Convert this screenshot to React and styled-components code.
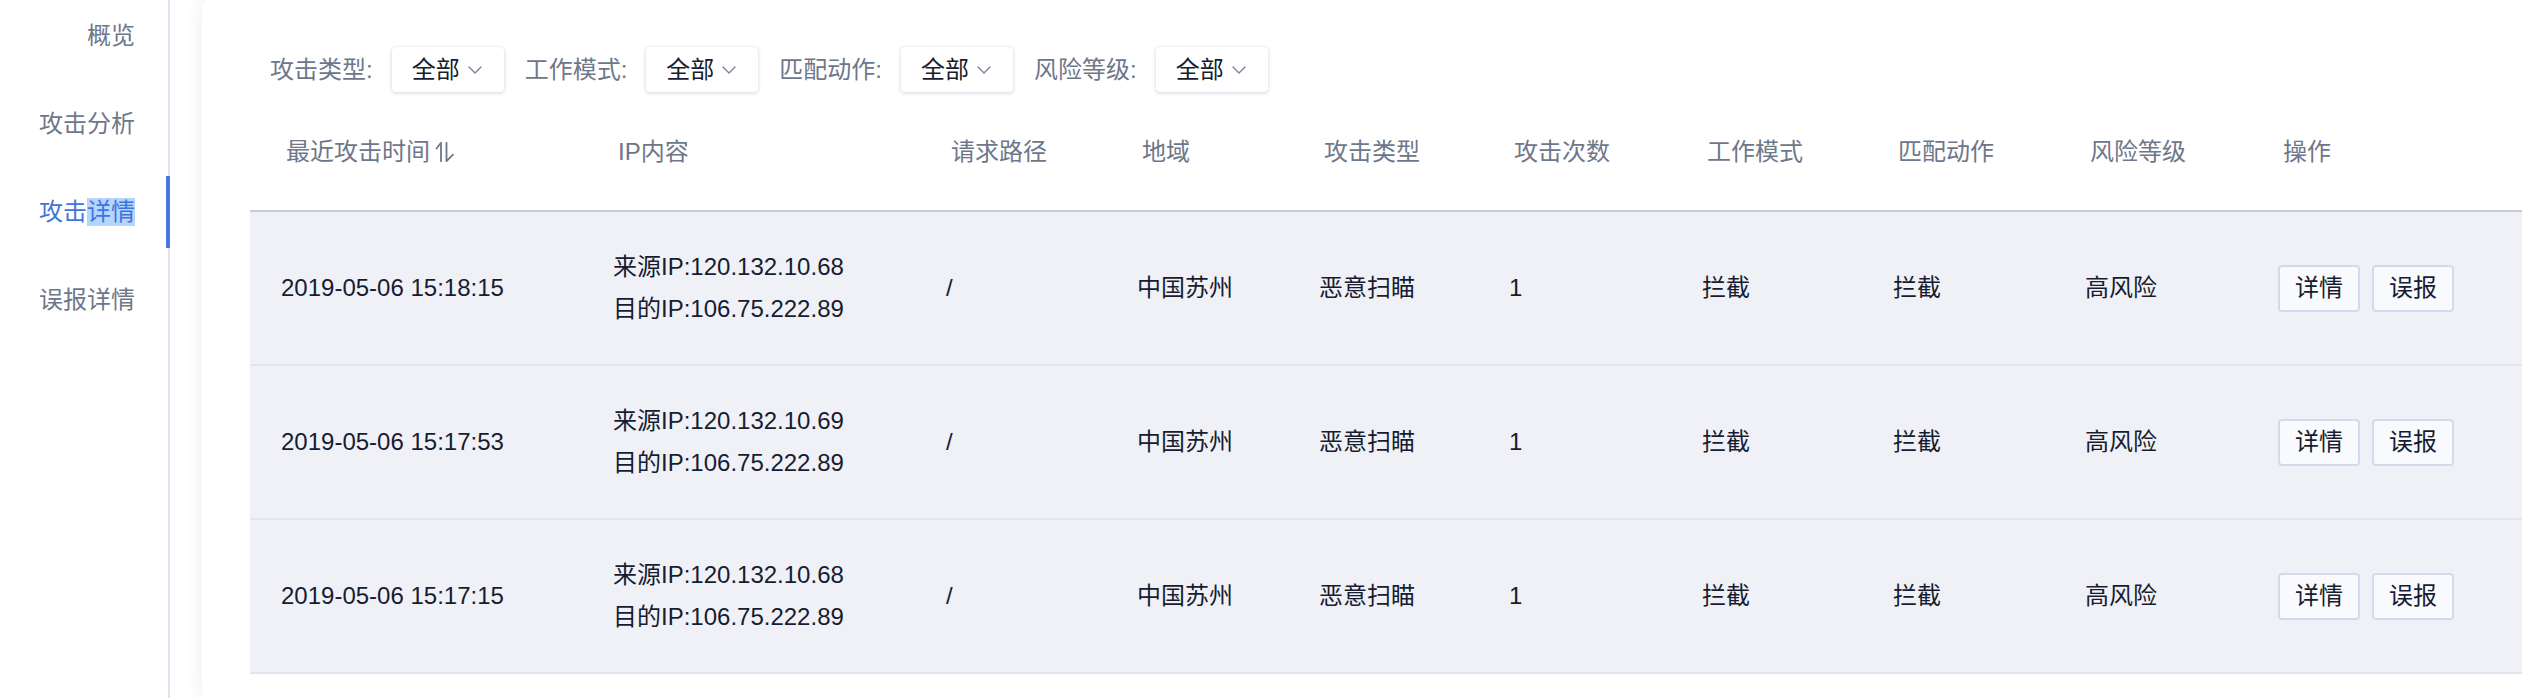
import React from "react";
import styled, { createGlobalStyle, css } from "styled-components";

const Global = createGlobalStyle`
  *, *::before, *::after { box-sizing: border-box; }
  html, body { margin: 0; padding: 0; background: #ffffff; overflow: hidden; }
  body { font-family: "Liberation Sans", "Noto Sans CJK SC", sans-serif; }
`;

const COLS = "332px 333px 191px 182px 190px 193px 191px 192px 193px 1fr";

const Page = styled.div`
  display: flex;
  width: 2536px;
  height: 698px;
  overflow: hidden;
  background: #ffffff;
`;

const Sidebar = styled.nav`
  flex: 0 0 170px;
  width: 170px;
  height: 100%;
  border-right: 2px solid #dfe3ef;
  display: flex;
  flex-direction: column;
  gap: 16px;
`;

const NavItem = styled.div`
  position: relative;
  height: 72px;
  display: flex;
  align-items: center;
  justify-content: flex-end;
  padding-right: 33px;
  font-size: 24px;
  line-height: 28px;
  color: #6e778a;
  ${(p) =>
    p.$active &&
    css`
      color: #3f74e0;
      &::after {
        content: "";
        position: absolute;
        right: -2px;
        top: 0;
        bottom: 0;
        width: 4px;
        background: #4677e2;
      }
    `}
`;

const Selected = styled.span`
  display: inline-block;
  height: 28px;
  line-height: 28px;
  background: #b4d5fd;
`;

const Main = styled.main`
  flex: 1 1 auto;
  padding-left: 32px;
  min-width: 0;
`;

const Card = styled.section`
  width: 2368px;
  height: 100%;
  background: #ffffff;
  border-radius: 8px 0 0 0;
  box-shadow: 0 0 18px rgba(40, 52, 110, 0.09);
  padding: 47px 48px 0 48px;
`;

const FilterBar = styled.div`
  display: flex;
  align-items: center;
  height: 45px;
  padding-left: 20px;
`;

const FilterLabel = styled.span`
  font-size: 24px;
  line-height: 1;
  color: #6e778a;
  margin-right: 19px;
  white-space: nowrap;
`;

const Select = styled.div`
  width: 112px;
  height: 45px;
  flex: 0 0 112px;
  display: flex;
  align-items: center;
  gap: 8px;
  padding-left: 20px;
  margin-right: 21px;
  background: #ffffff;
  border-radius: 4px;
  box-shadow: 0 1px 4px rgba(30, 40, 100, 0.18), 0 0 1px rgba(30, 40, 100, 0.12);
  font-size: 24px;
  line-height: 1;
  color: #171c30;
`;

const Table = styled.div`
  width: 2272px;
`;

const HeaderRow = styled.div`
  display: grid;
  grid-template-columns: ${COLS};
  align-items: center;
  height: 120px;
  padding-top: 2px;
  border-bottom: 2px solid #c8ccdb;
`;

const HeaderCell = styled.div`
  display: flex;
  align-items: center;
  padding-left: 36px;
  font-size: 24px;
  line-height: 1;
  color: #6e778a;
  white-space: nowrap;
`;

const Row = styled.div`
  display: grid;
  grid-template-columns: ${COLS};
  align-items: center;
  height: 154px;
  background: #f0f1f7;
  border-bottom: 2px solid #e2e5ef;
`;

const Cell = styled.div`
  padding-left: 31px;
  font-size: 24px;
  line-height: ${(p) => (p.$multi ? "42px" : "1")};
  color: #171c30;
  white-space: nowrap;
`;

const Actions = styled.div`
  display: flex;
  gap: 12px;
  padding-left: 31px;
`;

const ActionButton = styled.button`
  height: 47px;
  padding: 0 15px;
  border: 2px solid #d6d9ec;
  border-radius: 4px;
  background: #f9fafd;
  font-family: inherit;
  font-size: 24px;
  line-height: 1;
  color: #171c30;
  cursor: pointer;
`;

const SortIcon = styled.svg`
  margin-left: 5px;
  flex: 0 0 auto;
`;

const Chevron = () => (
  <svg width="14" height="8" viewBox="0 0 14 8" fill="none">
    <polyline points="1,1 7,7 13,1" stroke="#7a8396" strokeWidth="1.4" strokeLinecap="round" strokeLinejoin="round" />
  </svg>
);

const Sort = () => (
  <SortIcon width="20" height="20" viewBox="0 0 20 20" fill="none">
    <path d="M6 19.2V0.8L1.5 6.5" stroke="#6e778a" strokeWidth="1.8" strokeLinecap="round" strokeLinejoin="round" />
    <path d="M11.5 0.8v18.4l6.5-6.5" stroke="#6e778a" strokeWidth="1.8" strokeLinecap="round" strokeLinejoin="round" />
  </SortIcon>
);

const filters = ["攻击类型:", "工作模式:", "匹配动作:", "风险等级:"];
const headers = ["最近攻击时间", "IP内容", "请求路径", "地域", "攻击类型", "攻击次数", "工作模式", "匹配动作", "风险等级", "操作"];
const rows = [
  { time: "2019-05-06 15:18:15", src: "120.132.10.68", dst: "106.75.222.89" },
  { time: "2019-05-06 15:17:53", src: "120.132.10.69", dst: "106.75.222.89" },
  { time: "2019-05-06 15:17:15", src: "120.132.10.68", dst: "106.75.222.89" },
];

export default function App() {
  return (
    <>
      <Global />
      <Page>
        <Sidebar>
          <NavItem>概览</NavItem>
          <NavItem>攻击分析</NavItem>
          <NavItem $active>
            攻击<Selected>详情</Selected>
          </NavItem>
          <NavItem>误报详情</NavItem>
        </Sidebar>
        <Main>
          <Card>
            <FilterBar>
              {filters.map((f) => (
                <React.Fragment key={f}>
                  <FilterLabel>{f}</FilterLabel>
                  <Select>
                    全部
                    <Chevron />
                  </Select>
                </React.Fragment>
              ))}
            </FilterBar>
            <Table>
              <HeaderRow>
                {headers.map((h, i) => (
                  <HeaderCell key={h + i}>
                    {h}
                    {i === 0 && <Sort />}
                  </HeaderCell>
                ))}
              </HeaderRow>
              {rows.map((r) => (
                <Row key={r.time}>
                  <Cell>{r.time}</Cell>
                  <Cell $multi>
                    <div>来源IP:{r.src}</div>
                    <div>目的IP:{r.dst}</div>
                  </Cell>
                  <Cell>/</Cell>
                  <Cell>中国苏州</Cell>
                  <Cell>恶意扫瞄</Cell>
                  <Cell>1</Cell>
                  <Cell>拦截</Cell>
                  <Cell>拦截</Cell>
                  <Cell>高风险</Cell>
                  <Actions>
                    <ActionButton>详情</ActionButton>
                    <ActionButton>误报</ActionButton>
                  </Actions>
                </Row>
              ))}
            </Table>
          </Card>
        </Main>
      </Page>
    </>
  );
}
